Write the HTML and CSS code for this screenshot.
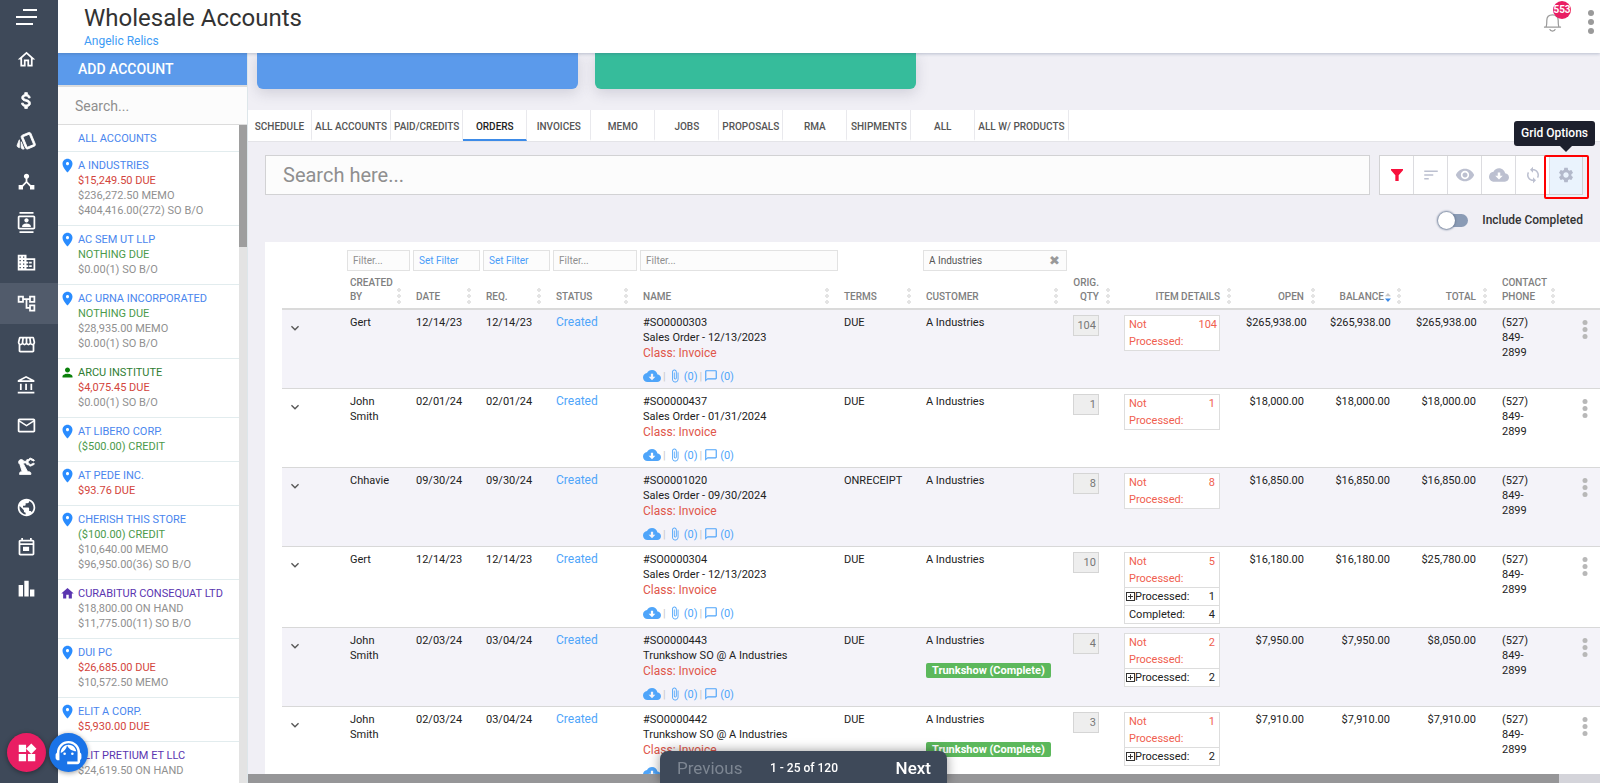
FILE: index.html
```html
<!DOCTYPE html>
<html lang="en">
<head>
    <meta charset="UTF-8">
    <meta name="viewport" content="width=device-width, initial-scale=1.0">
    <title>Wholesale Accounts</title>
    <link rel="stylesheet" href="styles.css">
</head>
<body>
    <svg class="sprite" aria-hidden="true">
        <symbol id="home" viewBox="0 0 24 24"><path d="M12 5.69l5 4.5V18h-2v-6H9v6H7v-7.81l5-4.5M12 3L2 12h3v8h6v-6h2v6h6v-8h3L12 3z"/></symbol>
        <symbol id="money" viewBox="0 0 24 24"><path d="M11.8 10.9c-2.27-.59-3-1.2-3-2.15 0-1.09 1.01-1.85 2.7-1.85 1.78 0 2.44.85 2.5 2.1h2.21c-.07-1.72-1.12-3.3-3.21-3.81V3h-3v2.16c-1.94.42-3.5 1.68-3.5 3.61 0 2.31 1.91 3.46 4.7 4.13 2.5.6 3 1.48 3 2.41 0 .69-.49 1.79-2.7 1.79-2.06 0-2.87-.92-2.98-2.1h-2.2c.12 2.19 1.76 3.42 3.68 3.83V21h3v-2.15c1.95-.37 3.5-1.5 3.5-3.55 0-2.84-2.43-3.81-4.7-4.4z" stroke="currentColor"/></symbol>
        <symbol id="style" viewBox="0 0 24 24"><path d="M2.53 19.65l1.34.56v-9.03l-2.43 5.86c-.41 1.02.08 2.19 1.09 2.61zm19.5-3.7L17.07 3.98c-.31-.75-1.04-1.21-1.81-1.23-.26 0-.53.04-.79.15L7.1 5.95c-.75.31-1.21 1.03-1.23 1.8-.01.27.04.54.15.8l4.96 11.97c.31.76 1.05 1.22 1.83 1.23.26 0 .52-.05.77-.15l7.36-3.05c1.02-.42 1.51-1.59 1.09-2.6zm-9.2 3.8L7.87 7.79l7.35-3.04h.01l4.95 11.95-7.35 3.05zM5.88 19.75c0 1.1.9 2 2 2h1.45l-3.45-8.34v6.34z" stroke="currentColor"/></symbol>
        <symbol id="hub" viewBox="0 0 24 24"><path d="M17 16l-4-4V8.82C14.16 8.4 15 7.3 15 6c0-1.66-1.34-3-3-3S9 4.34 9 6c0 1.3.84 2.4 2 2.82V12l-4 4H3v5h5v-3.05l4-4.2 4 4.2V21h5v-5h-4z"/></symbol>
        <symbol id="contacts" viewBox="0 0 24 24"><path d="M20 4H4c-1.1 0-2 .9-2 2v12c0 1.1.9 2 2 2h16c1.1 0 2-.9 2-2V6c0-1.1-.9-2-2-2zm0 14H4V6h16v12zM4 0h16v2H4zm0 22h16v2H4zm8-10c1.38 0 2.5-1.12 2.5-2.5S13.38 7 12 7 9.5 8.12 9.5 9.5 10.62 12 12 12zm5 4.49C17 13.9 13.69 13 12 13s-5 .9-5 3.49V17h10v-.51z"/></symbol>
        <symbol id="domain" viewBox="0 0 24 24"><path fill-rule="evenodd" d="M12 7V3H2v18h20V7H12zM5.5 18.5h-1.5v-1.5h1.5zM5.5 14.5h-1.5v-1.5h1.5zM5.5 10.5h-1.5v-1.5h1.5zM5.5 6.5h-1.5v-1.5h1.5zM9.5 18.5h-1.5v-1.5h1.5zM9.5 14.5h-1.5v-1.5h1.5zM9.5 10.5h-1.5v-1.5h1.5zM9.5 6.5h-1.5v-1.5h1.5zM20 19h-8v-2h2v-2h-2v-2h2v-2h-2V9h8z"/><path d="M15 11h3v2h-3zM15 15h3v2h-3z"/></symbol>
        <symbol id="tree" viewBox="0 0 24 24"><path d="M22 11V3h-7v3H9V3H2v8h7V8h2v10h4v3h7v-8h-7v3h-2V8h2v3h7zM7 9H4V5h3v4zm10 6h3v4h-3v-4zm0-10h3v4h-3V5z"/></symbol>
        <symbol id="store" viewBox="0 0 24 24"><path d="M21.9 8.89l-1.05-4.37c-.22-.9-1-1.52-1.91-1.52H5.05c-.9 0-1.69.63-1.9 1.52L2.1 8.89c-.24 1.02-.02 2.06.62 2.88.08.11.19.19.28.29V19c0 1.1.9 2 2 2h14c1.1 0 2-.9 2-2v-6.94c.09-.09.2-.18.28-.28.64-.82.87-1.87.62-2.89zm-2.99-3.9l1.05 4.37c.1.42.01.84-.25 1.17-.14.18-.44.47-.94.47-.61 0-1.14-.49-1.21-1.14L16.98 5l1.93-.01zM13 5h1.96l.54 4.52c.05.39-.07.78-.33 1.07-.22.26-.54.41-.95.41-.67 0-1.22-.59-1.22-1.31V5zM8.49 9.52L9.04 5H11v4.69c0 .72-.55 1.31-1.29 1.31-.34 0-.65-.15-.89-.41-.25-.29-.37-.68-.33-1.07zm-4.45-.16L5.05 5h1.97l-.58 4.86c-.08.65-.6 1.14-1.21 1.14-.49 0-.8-.29-.93-.47-.27-.32-.36-.75-.26-1.17zM5 19v-6.03c.08.01.15.03.23.03.87 0 1.66-.36 2.24-.95.6.6 1.4.95 2.31.95.87 0 1.65-.36 2.23-.93.59.57 1.39.93 2.29.93.84 0 1.64-.35 2.24-.95.58.59 1.37.95 2.24.95.08 0 .15-.02.23-.03V19H5z"/></symbol>
        <symbol id="bank" viewBox="0 0 24 24"><path d="M6.5 10h-2v7h2v-7zm6 0h-2v7h2v-7zm8.5 9H2v2h19v-2zm-2.5-9h-2v7h2v-7zm-7-6.74L16.71 6H6.29l5.21-2.74m0-2.26L2 6v2h19V6l-9.5-5z"/></symbol>
        <symbol id="mail" viewBox="0 0 24 24"><path d="M22 6c0-1.1-.9-2-2-2H4c-1.1 0-2 .9-2 2v12c0 1.1.9 2 2 2h16c1.1 0 2-.9 2-2V6zm-2 0l-8 5-8-5h16zm0 12H4V8l8 5 8-5v10z"/></symbol>
        <symbol id="arm" viewBox="0 0 24 24"><path d="M19.93 8.35l-3.6 1.68L14 7.7V6.3l2.33-2.33 3.6 1.68c.38.18.82.01 1-.36.18-.38.01-.82-.36-1l-3.92-1.83c-.38-.18-.83-.1-1.13.2L13.78 4.4c-.18-.24-.46-.4-.78-.4-.55 0-1 .45-1 1v1H8.82C8.4 4.84 7.3 4 6 4 4.34 4 3 5.34 3 7c0 1.1.6 2.05 1.48 2.58L7.08 18H6c-1.1 0-2 .9-2 2v1h13v-1c0-1.1-.9-2-2-2h-1.62L8.41 8.77c.17-.24.31-.49.41-.77H12v1c0 .55.45 1 1 1 .32 0 .6-.16.78-.4l1.74 1.74c.3.3.75.38 1.13.2l3.92-1.83c.38-.18.54-.62.36-1-.18-.37-.62-.54-1-.36z" stroke="currentColor"/></symbol>
        <symbol id="globe" viewBox="0 0 24 24"><path d="M12 2C6.48 2 2 6.48 2 12s4.48 10 10 10 10-4.48 10-10S17.52 2 12 2zm-1 17.93c-3.95-.49-7-3.85-7-7.93 0-.62.08-1.21.21-1.79L9 15v1c0 1.1.9 2 2 2v1.93zm6.9-2.54c-.26-.81-1-1.39-1.9-1.39h-1v-3c0-.55-.45-1-1-1H8v-2h2c.55 0 1-.45 1-1V7h2c1.1 0 2-.9 2-2v-.41c2.93 1.19 5 4.06 5 7.41 0 2.08-.8 3.97-2.1 5.39z"/></symbol>
        <symbol id="calendar" viewBox="0 0 24 24"><path d="M19 3h-1V1h-2v2H8V1H6v2H5c-1.1 0-2 .9-2 2v14c0 1.1.9 2 2 2h14c1.1 0 2-.9 2-2V5c0-1.1-.9-2-2-2zm0 16H5V9h14v10zm0-12H5V5h14v2zM8 11h7v5H8z"/></symbol>
        <symbol id="chart" viewBox="0 0 24 24"><path d="M3 8h5v13H3zM9.5 3h5v18h-5zM16 13h5v8h-5z"/></symbol>
        <symbol id="pin" viewBox="0 0 24 24"><path d="M12 1C7.6 1 4 4.600 4 9c0 6 8 14 8 14s8-8 8-14c0-4.400-3.600-8-8-8zm0 10.500c-1.380 0-2.500-1.120-2.500-2.500s1.120-2.500 2.500-2.500 2.500 1.120 2.500 2.500-1.120 2.500-2.500 2.500z"/></symbol>
        <symbol id="person" viewBox="0 0 24 24"><path d="M12 12c2.21 0 4-1.79 4-4s-1.79-4-4-4-4 1.79-4 4 1.79 4 4 4zm0 2c-2.67 0-8 1.34-8 4v2h16v-2c0-2.66-5.33-4-8-4z"/></symbol>
        <symbol id="house" viewBox="0 0 24 24"><path d="M10 20v-6h4v6h5v-8h3L12 3 2 12h3v8z"/></symbol>
        <symbol id="cloud" viewBox="0 0 24 24"><path d="M19.35 10.04C18.67 6.59 15.64 4 12 4 9.11 4 6.6 5.64 5.35 8.04 2.34 8.36 0 10.91 0 14c0 3.31 2.69 6 6 6h13c2.76 0 5-2.24 5-5 0-2.64-2.05-4.78-4.65-4.96zM16.5 13l-4.5 4.5L7.5 13h3V9h3v4h3z"/></symbol>
        <symbol id="clip" viewBox="0 0 24 24"><path d="M16.5 6v11.5c0 2.21-1.79 4-4 4s-4-1.79-4-4V5c0-1.38 1.12-2.5 2.5-2.5s2.5 1.12 2.5 2.5v10.5c0 .55-.45 1-1 1s-1-.45-1-1V6H10v9.5c0 1.38 1.12 2.5 2.5 2.5s2.5-1.12 2.5-2.5V5c0-2.21-1.79-4-4-4S7 2.79 7 5v12.5c0 3.04 2.46 5.5 5.5 5.5s5.500-2.460 5.500-5.500V6h-1.500z"/></symbol>
        <symbol id="chat" viewBox="0 0 24 24"><path d="M20 2H4c-1.1 0-2 .9-2 2v18l4-4h14c1.1 0 2-.9 2-2V4c0-1.1-.9-2-2-2zm0 14H6l-2 2V4h16v12z"/></symbol>
        <symbol id="chevron" viewBox="0 0 24 24"><path d="M7.4 8.6L12 13.2l4.6-4.6L18 10l-6 6-6-6z"/></symbol>
        <symbol id="dots" viewBox="0 0 6 26"><circle cx="3" cy="3.500" r="2.500"/><circle cx="3" cy="10.500" r="2.500"/><circle cx="3" cy="17.500" r="2.500"/></symbol>
        <symbol id="funnel" viewBox="0 0 24 24"><path d="M3 3h18v2l-6.5 7.5V21h-5v-8.5L3 5z"/></symbol>
        <symbol id="sort" viewBox="0 0 24 24"><path d="M3 18h6v-2H3v2zM3 6v2h18V6H3zm0 7h12v-2H3v2z"/></symbol>
        <symbol id="eye" viewBox="0 0 24 24"><path d="M12 4.5C7 4.5 2.73 7.61 1 12c1.73 4.39 6 7.5 11 7.5s9.27-3.11 11-7.5c-1.73-4.39-6-7.5-11-7.5zM12 17c-2.76 0-5-2.24-5-5s2.24-5 5-5 5 2.24 5 5-2.24 5-5 5zm0-8c-1.66 0-3 1.34-3 3s1.34 3 3 3 3-1.34 3-3-1.34-3-3-3z"/></symbol>
        <symbol id="sync" viewBox="0 0 24 24"><path d="M12 4V1L8 5l4 4V6c3.31 0 6 2.69 6 6 0 1.01-.25 1.97-.7 2.8l1.46 1.46C19.54 15.03 20 13.57 20 12c0-4.42-3.58-8-8-8zm0 14c-3.31 0-6-2.69-6-6 0-1.01.25-1.97.7-2.8L5.24 7.74C4.46 8.97 4 10.43 4 12c0 4.42 3.58 8 8 8v3l4-4-4-4v3z"/></symbol>
        <symbol id="gear" viewBox="0 0 24 24"><path d="M19.14 12.94c.04-.3.06-.61.06-.94 0-.32-.02-.64-.07-.94l2.03-1.58c.18-.14.23-.41.12-.61l-1.92-3.32c-.12-.22-.37-.29-.59-.22l-2.39.96c-.5-.38-1.03-.7-1.62-.94l-.36-2.54c-.04-.24-.24-.41-.48-.41h-3.84c-.24 0-.43.17-.47.41l-.36 2.54c-.59.24-1.13.57-1.62.94l-2.39-.96c-.22-.08-.47 0-.59.22L2.74 8.87c-.12.21-.08.47.12.61l2.03 1.58c-.05.3-.09.63-.09.94s.02.64.07.94l-2.03 1.58c-.18.14-.23.41-.12.61l1.92 3.32c.12.22.37.29.59.22l2.39-.96c.5.38 1.03.7 1.62.94l.36 2.54c.05.24.24.41.48.41h3.84c.24 0 .44-.17.47-.41l.36-2.54c.59-.24 1.13-.56 1.62-.94l2.39.96c.22.08.47 0 .59-.22l1.92-3.32c.12-.22.07-.47-.12-.61l-2.01-1.58zM12 15.6c-1.98 0-3.6-1.62-3.6-3.6s1.62-3.6 3.6-3.6 3.6 1.62 3.6 3.6-1.62 3.6-3.6 3.6z"/></symbol>
        <symbol id="bell" viewBox="0 0 20 22"><path d="M1 16.5h18M3 16.5c1-1 1-3 1-7 0-4 2.5-6 6-6s6 2 6 6c0 4 0 6 1 7M7 18.5c.5 1.5 1.5 2 3 2s2.5-.5 3-2" fill="none" stroke="currentColor" stroke-width="1.3"/></symbol>
        <symbol id="widgets" viewBox="0 0 24 24"><path d="M13 13v8h8v-8h-8zM3 21h8v-8H3v8zM3 3v8h8V3H3zm13.66-1.31L11 7.34 16.66 13l5.66-5.66-5.66-5.65z"/></symbol>
        <symbol id="agent" viewBox="0 0 24 24"><path d="M21 12.22C21 6.73 16.74 3 12 3c-4.69 0-9 3.65-9 9.28-.6.34-1 .98-1 1.72v2c0 1.1.9 2 2 2h1v-6.1c0-3.87 3.13-7 7-7s7 3.13 7 7V19h-8v2h8c1.1 0 2-.9 2-2v-1.22c.59-.31 1-.92 1-1.64v-2.3c0-.7-.41-1.31-1-1.62z"/><path fill-rule="evenodd" d="M18 11.030C17.520 8.180 15.040 6 12.050 6c-3.030 0-6.290 2.510-6.030 6.450 2.470-1.010 4.330-3.210 4.860-5.890 1.310 2.630 4 4.440 7.120 4.470z"/><circle cx="9" cy="13" r="1"/><circle cx="15" cy="13" r="1"/></symbol>
    </svg>

    <aside class="rail">
        <button class="burger" aria-label="Menu"><span></span><span></span><span></span></button>
        <nav class="rail-nav" aria-label="Main">
            <a href="#" aria-label="Home"><svg><use href="#home"/></svg></a>
            <a href="#" aria-label="Sales"><svg><use href="#money"/></svg></a>
            <a href="#" aria-label="Styles"><svg><use href="#style"/></svg></a>
            <a href="#" aria-label="Network"><svg><use href="#hub"/></svg></a>
            <a href="#" aria-label="Contacts"><svg><use href="#contacts"/></svg></a>
            <a href="#" aria-label="Vendors"><svg><use href="#domain"/></svg></a>
            <a href="#" aria-label="Wholesale" class="active"><svg><use href="#tree"/></svg></a>
            <a href="#" aria-label="Store"><svg><use href="#store"/></svg></a>
            <a href="#" aria-label="Bank"><svg><use href="#bank"/></svg></a>
            <a href="#" aria-label="Mail"><svg><use href="#mail"/></svg></a>
            <a href="#" aria-label="Manufacturing"><svg><use href="#arm"/></svg></a>
            <a href="#" aria-label="Web"><svg><use href="#globe"/></svg></a>
            <a href="#" aria-label="Calendar"><svg><use href="#calendar"/></svg></a>
            <a href="#" aria-label="Reports"><svg><use href="#chart"/></svg></a>
        </nav>
    </aside>

    <div class="page">
        <header class="topbar">
            <div>
                <h1>Wholesale Accounts</h1>
                <a href="#">Angelic Relics</a>
            </div>
            <div class="topbar-right">
                <button class="bell" aria-label="Notifications"><svg><use href="#bell"/></svg><span class="badge">553</span></button>
                <button class="more" aria-label="More"><i></i><i></i><i></i></button>
            </div>
        </header>

        <div class="content">
            <section class="accounts">
                <button class="add">ADD ACCOUNT</button>
                <input class="account-search" type="text" placeholder="Search..." aria-label="Search accounts">
                <div class="account-scroll">
                    <ul class="account-list" id="accounts">
                        <li class="all"><a href="#">ALL ACCOUNTS</a></li>
                    </ul>
                    <div class="scrollbar"><div class="thumb"></div></div>
                </div>
            </section>

            <main class="main">
                <div class="cards">
                    <div class="card blue"></div>
                    <div class="card green"></div>
                </div>

                <nav class="tabs" aria-label="Sections">
                    <a href="#">SCHEDULE</a>
                    <a href="#">ALL ACCOUNTS</a>
                    <a href="#">PAID/CREDITS</a>
                    <a href="#" class="active">ORDERS</a>
                    <a href="#">INVOICES</a>
                    <a href="#">MEMO</a>
                    <a href="#">JOBS</a>
                    <a href="#">PROPOSALS</a>
                    <a href="#">RMA</a>
                    <a href="#">SHIPMENTS</a>
                    <a href="#">ALL</a>
                    <a href="#">ALL W/ PRODUCTS</a>
                </nav>

                <div class="toolbar">
                    <input class="search" type="text" placeholder="Search here..." aria-label="Search orders">
                    <div class="tools">
                        <button class="filter" aria-label="Filter"><svg><use href="#funnel"/></svg></button>
                        <button aria-label="Sort"><svg><use href="#sort"/></svg></button>
                        <button aria-label="Columns"><svg class="wide"><use href="#eye"/></svg></button>
                        <button aria-label="Download"><svg class="wide"><use href="#cloud"/></svg></button>
                        <button aria-label="Refresh"><svg><use href="#sync"/></svg></button>
                        <button class="options" aria-label="Grid Options"><svg><use href="#gear"/></svg></button>
                        <div class="highlight"></div>
                        <div class="tooltip" role="tooltip">Grid Options</div>
                    </div>
                </div>

                <label class="switch">
                    <input type="checkbox">
                    <span class="track"></span>
                    Include Completed
                </label>

                <div class="grid">
                    <table>
                        <colgroup>
                            <col class="w-expand"><col class="w-by"><col class="w-date"><col class="w-date"><col class="w-status">
                            <col><col class="w-terms"><col class="w-customer"><col class="w-qty"><col class="w-items">
                            <col class="w-open"><col class="w-sum"><col class="w-sum"><col class="w-phone"><col class="w-more">
                        </colgroup>
                        <thead>
                            <tr class="filters">
                                <td></td>
                                <td><input type="text" placeholder="Filter..." aria-label="Filter created by"></td>
                                <td><button>Set Filter</button></td>
                                <td><button>Set Filter</button></td>
                                <td><input type="text" placeholder="Filter..." aria-label="Filter status"></td>
                                <td><input type="text" placeholder="Filter..." aria-label="Filter name"></td>
                                <td></td>
                                <td><div class="clearable"><input type="text" value="A Industries" aria-label="Filter customer"><button class="clear" aria-label="Clear">✖</button></div></td>
                                <td colspan="7"></td>
                            </tr>
                            <tr class="heads">
                                <th></th>
                                <th>CREATED BY</th>
                                <th>DATE</th>
                                <th>REQ.</th>
                                <th>STATUS</th>
                                <th>NAME</th>
                                <th>TERMS</th>
                                <th>CUSTOMER</th>
                                <th class="num">ORIG. QTY</th>
                                <th class="num">ITEM DETAILS</th>
                                <th class="num">OPEN</th>
                                <th class="num sorted">BALANCE</th>
                                <th class="num">TOTAL</th>
                                <th>CONTACT PHONE</th>
                                <th></th>
                            </tr>
                        </thead>
                        <tbody id="orders"></tbody>
                    </table>
                </div>
                <div class="hscroll"><div class="thumb"></div></div>
            </main>
        </div>
    </div>

    <div class="pager">
        <button class="prev" disabled>Previous</button>
        <span>1 - 25 of 120</span>
        <button class="next">Next</button>
    </div>
    <button class="fab pink" aria-label="Apps"><svg><use href="#widgets"/></svg></button>
    <button class="fab support" aria-label="Support"><svg><use href="#agent"/></svg></button>

    <script src="script.js"></script>
</body>
</html>
```
FILE: styles.css
```css
* {
    box-sizing: border-box;
}
body {
    margin: 0;
    display: flex;
    height: 100vh;
    overflow: hidden;
    font-family: Roboto, sans-serif;
    font-size: 11px;
    line-height: 15px;
    color: #222;
    background-color: #f0eff5;
}
a {
    text-decoration: none;
    color: #3d9bf5;
}
button, input {
    font-family: inherit;
    font-size: inherit;
    margin: 0;
}
button {
    border: none;
    background: none;
    padding: 0;
    cursor: pointer;
}
input::placeholder {
    color: #8f8f8f;
    opacity: 1;
}
svg {
    fill: currentColor;
    flex: none;
}
.sprite {
    position: absolute;
    width: 0;
    height: 0;
}

/* left icon rail */
.rail {
    width: 58px;
    flex: none;
    background-color: #3e4959;
    color: #fff;
}
.burger {
    display: flex;
    flex-direction: column;
    gap: 5px;
    width: 21px;
    margin: 9px 0 14px 16px;
}
.burger span {
    width: 17px;
    height: 2px;
    background-color: #fff;
}
.burger span:first-child {
    width: 14px;
    align-self: flex-end;
}
.burger span:nth-child(2) {
    width: 21px;
}
.rail-nav {
    display: flex;
    flex-direction: column;
    height: 570px;
}
.rail-nav a {
    flex: 1;
    display: flex;
    align-items: center;
    padding-left: 16px;
    color: #fff;
}
.rail-nav a.active {
    background-color: #515b6b;
}
.rail-nav svg {
    width: 21px;
    height: 21px;
}

.page {
    flex: 1;
    min-width: 0;
    display: flex;
    flex-direction: column;
}
.topbar {
    display: flex;
    justify-content: space-between;
    height: 53px;
    flex: none;
    padding: 4px 6px 0 26px;
    background-color: #fff;
    box-shadow: 0 1px 3px rgba(60, 80, 120, 0.3);
    z-index: 1;
}
.topbar h1 {
    margin: 0;
    font-size: 24px;
    font-weight: 400;
    line-height: 28px;
    color: #333;
}
.topbar a {
    display: block;
    font-size: 12px;
    line-height: 18px;
}
.topbar-right {
    display: flex;
    gap: 26px;
}
.bell {
    position: relative;
    align-self: flex-start;
    margin-top: 7px;
    color: #9a9a9a;
}
.bell svg {
    display: block;
    width: 19px;
    height: 22px;
}
.badge {
    position: absolute;
    left: 10px;
    top: -10px;
    width: 18px;
    height: 18px;
    border-radius: 50%;
    background-color: #e91e63;
    color: #fff;
    font-size: 10px;
    font-weight: 700;
    line-height: 18px;
}
.more {
    display: flex;
    flex-direction: column;
    gap: 3px;
    align-self: flex-start;
    margin-top: 6px;
}
.more i {
    width: 6px;
    height: 6px;
    border-radius: 50%;
    background-color: #9a9a9a;
}

.content {
    flex: 1;
    min-height: 0;
    display: flex;
}

/* accounts column */
.accounts {
    width: 190px;
    flex: none;
    display: flex;
    flex-direction: column;
    background-color: #fff;
    border-right: 1px solid #dde6ea;
}
.add {
    height: 32px;
    flex: none;
    padding: 0 20px;
    text-align: left;
    background-color: #5b9aeb;
    color: #fff;
    font-size: 14px;
    font-weight: 500;
}
.account-search {
    height: 40px;
    flex: none;
    padding: 0 17px;
    border: 1px solid #dcdcdc;
    border-width: 2px 0 1px;
    background-color: #fcfcfc;
    font-size: 14px;
}
.account-scroll {
    flex: 1;
    min-height: 0;
    display: flex;
    overflow: hidden;
}
.account-list {
    flex: 1;
    margin: 0;
    padding: 0;
    list-style: none;
}
.account-list li {
    display: flex;
    padding: 6px 0 7px 2px;
    border-bottom: 1px solid #e2ecee;
    color: #909090;
}
.account-list li.all {
    padding: 6px 0 5px 20px;
}
.account-list a {
    display: block;
    color: #4a86ee;
}
.account-list svg {
    width: 15px;
    height: 15px;
    margin-right: 3px;
    color: #2a8cff;
}
.account-list .person svg {
    color: #0a800a;
}
.account-list .person a {
    color: #2f7d32;
}
.account-list .house svg, .account-list .house a {
    color: #5a35b0;
}
.account-list .due {
    color: #d3453c;
}
.account-list .ok {
    color: #4b9a4b;
}
.scrollbar {
    width: 8px;
    background-color: #e3e3e3;
}
.scrollbar .thumb {
    height: 122px;
    background-color: #9e9e9e;
}

/* main area */
.main {
    flex: 1;
    min-width: 0;
    display: flex;
    flex-direction: column;
    overflow: hidden;
}
.cards {
    display: grid;
    grid-template-columns: repeat(4, 1fr);
    gap: 17px;
    padding: 0 9px;
    margin-bottom: 21px;
}
.card {
    height: 36px;
    border-radius: 0 0 6px 6px;
    box-shadow: 0 4px 14px rgba(60, 60, 90, 0.18);
}
.card.blue {
    background-color: #5b9aeb;
}
.card.green {
    background-color: #36bc9b;
}
.tabs {
    display: flex;
    flex: none;
    height: 32px;
    background-color: #fff;
    border-bottom: 1px solid #e4e4e8;
}
.tabs a {
    display: flex;
    align-items: center;
    justify-content: center;
    min-width: 64px;
    padding: 3px 3px 0;
    border-right: 1px solid #e9e9ed;
    border-bottom: 2px solid transparent;
    color: #555;
    font-size: 10px;
    font-weight: 500;
}
.tabs a.active {
    color: #222;
    border-bottom-color: #3d8be8;
}
.toolbar {
    display: flex;
    flex: none;
    gap: 9px;
    padding: 13px 17px 0;
}
.search {
    flex: 1;
    height: 40px;
    padding: 0 17px;
    border: 1px solid #d2d2d4;
    background-color: #fcfcfc;
    font-size: 20px;
}
.tools {
    position: relative;
    display: flex;
    border: 1px solid #d2d2d4;
    background-color: #fff;
}
.tools button {
    width: 34px;
    display: flex;
    align-items: center;
    justify-content: center;
    border-right: 1px solid #dcdce0;
    color: #bcc0d0;
}
.tools .options {
    border-right: none;
    width: 32px;
    background-color: #eaf3fd;
    color: #b3b9cb;
}
.tools .filter {
    color: #f8103c;
}
.tools svg {
    width: 18px;
    height: 18px;
}
.tools svg.wide {
    width: 20px;
    height: 20px;
}
.tools .filter svg {
    width: 16px;
}
.highlight {
    position: absolute;
    top: -1px;
    right: -7px;
    width: 45px;
    height: 44px;
    border: 2px solid #ff0000;
    border-radius: 2px;
}
.tooltip {
    position: absolute;
    right: -13px;
    top: -35px;
    padding: 5px 7px;
    border-radius: 3px;
    background-color: #1d202d;
    color: #fff;
    font-size: 12px;
    font-weight: 500;
    white-space: nowrap;
}
.tooltip::after {
    content: "";
    position: absolute;
    right: 23px;
    top: 100%;
    border: 6px solid transparent;
    border-top-color: #1d202d;
}
.switch {
    display: flex;
    align-items: center;
    align-self: flex-end;
    height: 47px;
    flex: none;
    padding: 3px 17px 0 0;
    font-size: 12px;
    font-weight: 500;
    color: #333;
}
.switch input {
    position: absolute;
    opacity: 0;
}
.track {
    position: relative;
    width: 28px;
    height: 13px;
    margin-right: 14px;
    border-radius: 7px;
    background-color: #8a9bb5;
}
.track::before {
    content: "";
    position: absolute;
    left: -2px;
    top: -2px;
    width: 17px;
    height: 17px;
    border-radius: 50%;
    background-color: #fff;
    box-shadow: 0 0 2px 1px #71809a;
}

/* orders grid */
.grid {
    flex: 1;
    min-height: 0;
    overflow: hidden;
    margin-left: 17px;
    padding: 7px 0 0 17px;
    background-color: #fff;
}
table {
    width: 100%;
    table-layout: fixed;
    border-collapse: collapse;
}
.w-expand { width: 63px; }
.w-by { width: 66px; }
.w-date { width: 70px; }
.w-status { width: 87px; }
.w-terms { width: 82px; }
.w-customer { width: 147px; }
.w-qty { width: 52px; }
.w-items { width: 121px; }
.w-open { width: 84px; }
.w-sum { width: 86px; }
.w-phone { width: 68px; }
.w-more { width: 35px; }
.filters td {
    padding: 0 1px 0 2px;
    height: 22px;
}
.filters input, .filters button {
    display: block;
    width: 100%;
    height: 21px;
    padding: 0 5px;
    border: 1px solid #e2e2e2;
    background-color: #fcfcfc;
    color: #555;
    font-size: 10px;
    text-align: left;
}
.filters button {
    color: #4a9cf8;
}
.clearable {
    position: relative;
}
.clearable .clear {
    position: absolute;
    right: 7px;
    top: 0;
    width: auto;
    padding: 0;
    border: none;
    background: none;
    color: #999;
    font-family: "DejaVu Sans", sans-serif;
    font-size: 13px;
}
.heads th {
    position: relative;
    height: 38px;
    padding: 5px 21px 4px 5px;
    border-bottom: 2px solid #dadada;
    color: #808080;
    font-size: 10px;
    font-weight: 500;
    line-height: 14px;
    text-align: left;
    vertical-align: bottom;
}
.heads th:not(:empty)::after {
    content: "";
    position: absolute;
    right: 10px;
    bottom: 4px;
    width: 4px;
    height: 17px;
    background: radial-gradient(circle, #e4e4e4 2px, transparent 2px) 0 0 / 4px 6px;
}
.heads .num, .num {
    text-align: right;
}
.heads .sorted {
    padding-right: 27px;
}
.heads .sorted::before {
    content: "";
    position: absolute;
    right: 20px;
    bottom: 6px;
    width: 6px;
    height: 9px;
    background: linear-gradient(#c8c8c8 50%, #3d8be8 50%);
    clip-path: polygon(50% 0, 100% 35%, 0 35%, 0 60%, 100% 60%, 50% 100%, 0 60%, 0 35%);
}
tbody > tr {
    height: 79px;
    border-bottom: 1px solid #d8d8d8;
}
#orders > tr:nth-child(odd) {
    background-color: #f4f3f9;
}
#orders > tr > td {
    padding: 5px 21px 3px 5px;
    vertical-align: top;
}
#orders > tr > td.expand {
    padding: 10px 0 0 5px;
}
.expand svg {
    display: block;
    width: 16px;
    height: 16px;
    color: #555;
}
.status {
    color: #4fa5fa;
    font-size: 12px;
}
.class {
    color: #e0564a;
    font-size: 12px;
    line-height: 16px;
}
#orders > tr > td.name {
    padding-right: 5px;
}
.links {
    display: flex;
    align-items: center;
    margin-top: 6px;
    color: #c8c8c8;
}
.links a {
    display: flex;
    align-items: center;
    gap: 2px;
    margin: 0 2px;
    color: #4fa5fa;
}
.links .down {
    margin-left: 0;
}
.links svg {
    width: 14px;
    height: 14px;
}
.links .down svg {
    width: 18px;
    height: 18px;
}
.tag {
    display: inline-block;
    margin-top: 15px;
    padding: 0 6px;
    border-radius: 2px;
    background-color: #5cb85c;
    color: #fff;
    font-weight: 700;
    white-space: nowrap;
}
#orders .qty {
    display: block;
    width: 26px;
    height: 21px;
    margin-left: auto;
    padding: 0 2px;
    border: 1px solid #d5d5d5;
    background-color: #eee;
    color: #777;
    text-align: right;
}
#orders > tr > td.details {
    padding-left: 4px;
}
.items {
    width: 96px;
    border: 1px solid #ddd;
    background-color: #fff;
}
.items td {
    padding: 0 4px;
    line-height: 17px;
    vertical-align: top;
}
.items .label {
    width: 70px;
}
.items tr {
    height: auto;
    border-bottom: 1px solid #ddd;
}
.items .not {
    color: #f0604f;
}
.items .plus {
    padding: 0 0 0 1px;
    white-space: nowrap;
}
.plus i {
    display: inline-block;
    position: relative;
    width: 9px;
    height: 9px;
    border: 1px solid #333;
    vertical-align: -1px;
}
.plus i::before, .plus i::after {
    content: "";
    position: absolute;
    left: 1px;
    top: 3px;
    width: 5px;
    height: 1px;
    background-color: #333;
}
.plus i::after {
    transform: rotate(90deg);
}
#orders > tr > td.row-more {
    padding: 9px 0 0 17px;
}
.row-more svg {
    display: block;
    width: 6px;
    height: 26px;
    color: #b8b8b8;
}
.hscroll {
    height: 9px;
    flex: none;
    background-color: #d4d4da;
}
.hscroll .thumb {
    width: 97%;
    height: 100%;
    background-color: #969698;
}

/* floating controls */
.pager {
    position: fixed;
    left: 660px;
    bottom: 0;
    width: 287px;
    height: 32px;
    display: grid;
    grid-template-columns: 1fr auto 1fr;
    align-items: center;
    padding: 2px 16px 0 17px;
    border-radius: 8px 8px 0 0;
    background-color: #3e4959;
    box-shadow: 0 0 12px rgba(0, 0, 0, 0.4);
    color: #fff;
    font-size: 12px;
    font-weight: 500;
}
.pager button {
    color: #fff;
    font-size: 17px;
    font-weight: 500;
    justify-self: end;
}
.pager .prev {
    color: #7d8692;
    font-weight: 400;
    justify-self: start;
}
.fab {
    position: fixed;
    left: 7px;
    bottom: 11px;
    width: 39px;
    height: 39px;
    display: flex;
    align-items: center;
    justify-content: center;
    border-radius: 50%;
    background-color: #e91e63;
    color: #fff;
    box-shadow: 0 1px 5px rgba(0, 0, 0, 0.4);
}
.fab svg {
    width: 22px;
    height: 22px;
}
.fab.support {
    left: 49px;
    background-color: #1a73e8;
}
.support svg {
    width: 31px;
    height: 31px;
}
```
FILE: script.js
```js
// icon, name, then one entry per line: [text, class]
const accounts = [
    ['pin', 'A INDUSTRIES', ['$15,249.50 DUE', 'due'], ['$236,272.50 MEMO'], ['$404,416.00(272) SO B/O']],
    ['pin', 'AC SEM UT LLP', ['NOTHING DUE', 'ok'], ['$0.00(1) SO B/O']],
    ['pin', 'AC URNA INCORPORATED', ['NOTHING DUE', 'ok'], ['$28,935.00 MEMO'], ['$0.00(1) SO B/O']],
    ['person', 'ARCU INSTITUTE', ['$4,075.45 DUE', 'due'], ['$0.00(1) SO B/O']],
    ['pin', 'AT LIBERO CORP.', ['($500.00) CREDIT', 'ok']],
    ['pin', 'AT PEDE INC.', ['$93.76 DUE', 'due']],
    ['pin', 'CHERISH THIS STORE', ['($100.00) CREDIT', 'ok'], ['$10,640.00 MEMO'], ['$96,950.00(36) SO B/O']],
    ['house', 'CURABITUR CONSEQUAT LTD', ['$18,800.00 ON HAND'], ['$11,775.00(11) SO B/O']],
    ['pin', 'DUI PC', ['$26,685.00 DUE', 'due'], ['$10,572.50 MEMO']],
    ['pin', 'ELIT A CORP.', ['$5,930.00 DUE', 'due']],
    ['house', 'ELIT PRETIUM ET LLC', ['$24,619.50 ON HAND']]
];

const orders = [
    { by: 'Gert', date: '12/14/23', req: '12/14/23', no: '303', name: 'Sales Order - 12/13/2023', terms: 'DUE', qty: 104, not: 104, open: '$265,938.00', total: '$265,938.00' },
    { by: 'John Smith', date: '02/01/24', req: '02/01/24', no: '437', name: 'Sales Order - 01/31/2024', terms: 'DUE', qty: 1, not: 1, open: '$18,000.00', total: '$18,000.00' },
    { by: 'Chhavie', date: '09/30/24', req: '09/30/24', no: '1020', name: 'Sales Order - 09/30/2024', terms: 'ONRECEIPT', qty: 8, not: 8, open: '$16,850.00', total: '$16,850.00' },
    { by: 'Gert', date: '12/14/23', req: '12/14/23', no: '304', name: 'Sales Order - 12/13/2023', terms: 'DUE', qty: 10, not: 5, processed: 1, completed: 4, open: '$16,180.00', total: '$25,780.00' },
    { by: 'John Smith', date: '02/03/24', req: '03/04/24', no: '443', name: 'Trunkshow SO @ A Industries', terms: 'DUE', tag: true, qty: 4, not: 2, processed: 2, open: '$7,950.00', total: '$8,050.00' },
    { by: 'John Smith', date: '02/03/24', req: '03/04/24', no: '442', name: 'Trunkshow SO @ A Industries', terms: 'DUE', tag: true, qty: 3, not: 1, processed: 2, open: '$7,910.00', total: '$7,910.00' }
];

function icon(id) {
    return `<svg><use href="#${id}"/></svg>`;
}

document.getElementById('accounts').innerHTML += accounts.map(([type, name, ...lines]) => `
    <li class="${type}">
        ${icon(type)}
        <div>
            <a href="#">${name}</a>
            ${lines.map(([text, cls]) => `<div class="${cls || ''}">${text}</div>`).join('')}
        </div>
    </li>`).join('');

function itemRows(o) {
    let rows = `<tr class="not"><td class="label">Not Processed:</td><td class="num">${o.not}</td></tr>`;
    if (o.processed) {
        rows += `<tr><td class="plus"><i></i>Processed:</td><td class="num">${o.processed}</td></tr>`;
    }
    if (o.completed) {
        rows += `<tr><td>Completed:</td><td class="num">${o.completed}</td></tr>`;
    }
    return rows;
}

document.getElementById('orders').innerHTML = orders.map(o => `
    <tr>
        <td class="expand"><button aria-label="Expand">${icon('chevron')}</button></td>
        <td>${o.by}</td>
        <td>${o.date}</td>
        <td>${o.req}</td>
        <td><a href="#" class="status">Created</a></td>
        <td class="name">
            <div>#SO${o.no.padStart(7, '0')}</div>
            <div>${o.name}</div>
            <div class="class">Class: Invoice</div>
            <div class="links">
                <a href="#" class="down" aria-label="Download">${icon('cloud')}</a>|
                <a href="#">${icon('clip')}(0)</a>|
                <a href="#">${icon('chat')}(0)</a>
            </div>
        </td>
        <td>${o.terms}</td>
        <td>A Industries${o.tag ? '<br><span class="tag">Trunkshow (Complete)</span>' : ''}</td>
        <td><input class="qty" type="text" value="${o.qty}" aria-label="Original quantity" disabled></td>
        <td class="details"><table class="items"><tbody>${itemRows(o)}</tbody></table></td>
        <td class="num">${o.open}</td>
        <td class="num">${o.open}</td>
        <td class="num">${o.total}</td>
        <td>(527) 849-2899</td>
        <td class="row-more"><button aria-label="Row menu">${icon('dots')}</button></td>
    </tr>`).join('');
```
